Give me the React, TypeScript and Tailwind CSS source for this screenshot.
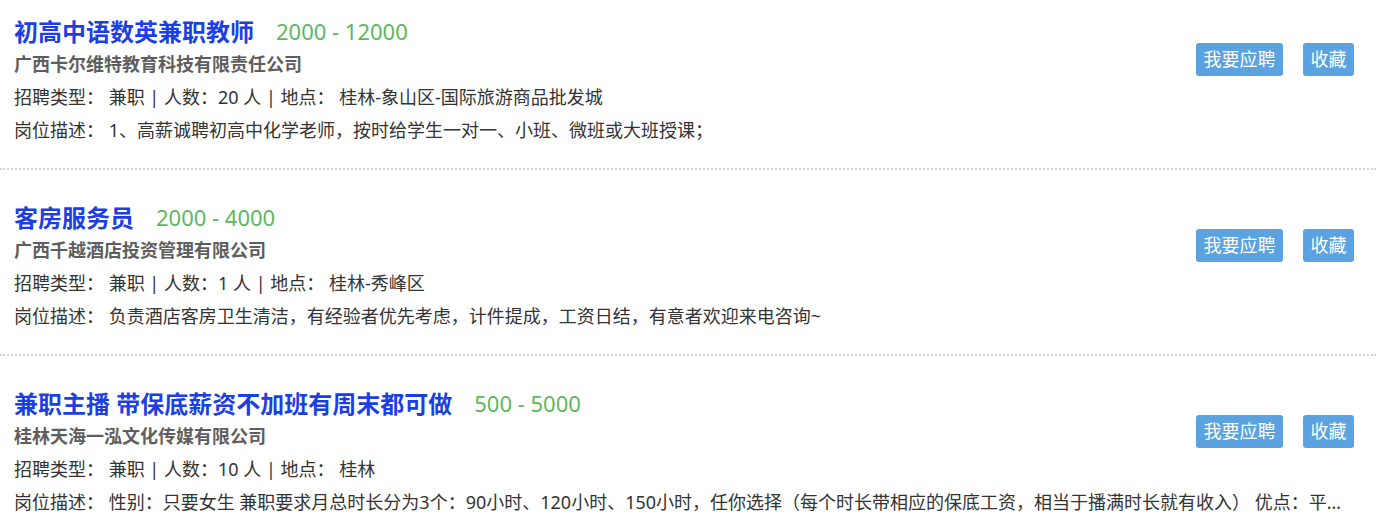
// 招聘列表：标题 + 薪资、公司、招聘信息、岗位描述，右侧两个按钮。

const FONT = '"Noto Sans", "Noto Sans CJK SC", sans-serif'

type Job = {
  title: string
  salary: string
  company: string
  count: number
  place: string
  desc: string
}

const JOBS: Job[] = [
  {
    title: '初高中语数英兼职教师',
    salary: '2000 - 12000',
    company: '广西卡尔维特教育科技有限责任公司',
    count: 20,
    place: '桂林-象山区-国际旅游商品批发城',
    desc: '1、高薪诚聘初高中化学老师，按时给学生一对一、小班、微班或大班授课；',
  },
  {
    title: '客房服务员',
    salary: '2000 - 4000',
    company: '广西千越酒店投资管理有限公司',
    count: 1,
    place: '桂林-秀峰区',
    desc: '负责酒店客房卫生清洁，有经验者优先考虑，计件提成，工资日结，有意者欢迎来电咨询~',
  },
  {
    title: '兼职主播 带保底薪资不加班有周末都可做',
    salary: '500 - 5000',
    company: '桂林天海一泓文化传媒有限公司',
    count: 10,
    place: '桂林',
    desc: '性别：只要女生 兼职要求月总时长分为3个：90小时、120小时、150小时，任你选择（每个时长带相应的保底工资，相当于播满时长就有收入） 优点：平台扶持，新人流量倾斜，专业运营一对一指导',
  },
]

function JobItem({ job, first }: { job: Job; first: boolean }) {
  return (
    <div className={`border-b-2 border-dotted border-[#d4d4d4] pl-[14px] pr-[22px] pb-[21px] ${first ? 'pt-[15px]' : 'pt-[31px]'}`}>
      <div className="flex items-start">
        <div className="flex-1 min-w-0">
          <div className="flex items-center h-[33px] whitespace-nowrap">
            <span className="text-[24px] font-bold text-[#1c3fe4]">{job.title}</span>
            <span className="ml-[22px] text-[22px] text-[#5cb85c]">{job.salary}</span>
          </div>
          <div className="h-[33px] leading-[33px] text-[18px] font-bold text-[#5e5e5e]">{job.company}</div>
          <div className="h-[33px] leading-[33px] text-[18px] text-[#333]">
            招聘类型： 兼职 | 人数：{job.count} 人 | 地点： {job.place}
          </div>
        </div>
        <div className="flex gap-[20px] mt-[27.5px]">
          <button className="w-[87px] h-[33px] rounded-[3px] bg-[#5aa3e0] text-white text-[18px] leading-none">我要应聘</button>
          <button className="w-[51px] h-[33px] rounded-[3px] bg-[#5aa3e0] text-white text-[18px] leading-none">收藏</button>
        </div>
      </div>
      <div className="h-[33px] leading-[33px] text-[18px] text-[#333] truncate pr-[8px]">岗位描述： {job.desc}</div>
    </div>
  )
}

export default function App() {
  return (
    <div className="w-[1376px] bg-white" style={{ fontFamily: FONT }}>
      {JOBS.map((j, i) => (
        <JobItem key={i} job={j} first={i === 0} />
      ))}
    </div>
  )
}
